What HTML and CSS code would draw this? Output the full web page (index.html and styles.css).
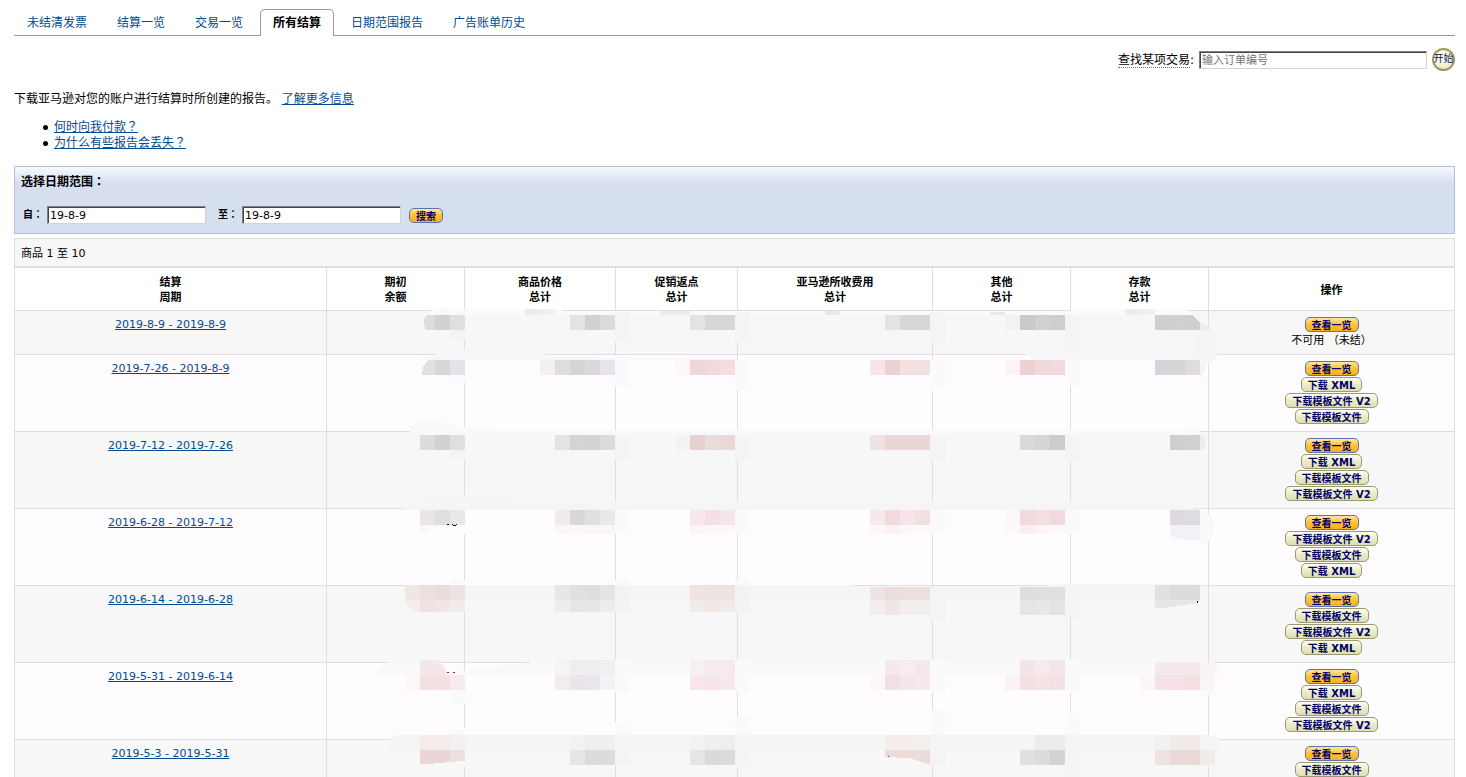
FILE: index.html
```html
<!DOCTYPE html>
<html lang="zh-CN">
<head>
<meta charset="utf-8">
<title>所有结算</title>
<link rel="stylesheet" href="styles.css">
</head>
<body>
<nav class="tabs">
  <a class="tab" href="#">未结清发票</a>
  <a class="tab" href="#">结算一览</a>
  <a class="tab" href="#">交易一览</a>
  <a class="tab tab-active" href="#" aria-current="page">所有结算</a>
  <a class="tab" href="#">日期范围报告</a>
  <a class="tab" href="#">广告账单历史</a>
</nav>

<form class="lookup">
  <label for="order"><span class="hint">查找某项交易</span>:</label>
  <input class="field lookup-field" id="order" type="text" placeholder="输入订单编号">
  <button class="go" type="button">开始</button>
</form>

<p class="intro">下载亚马逊对您的账户进行结算时所创建的报告。 <a href="#">了解更多信息</a></p>
<ul class="faq">
  <li><a href="#">何时向我付款<span class="punct" lang="zh-TW">？</span></a></li>
  <li><a href="#">为什么有些报告会丢失<span class="punct" lang="zh-TW">？</span></a></li>
</ul>

<form class="range">
  <h2 class="range-title">选择日期范围<span class="punct" lang="zh-TW">：</span></h2>
  <div class="range-row">
    <label for="from">自<span class="punct" lang="zh-TW">：</span></label>
    <input class="field date" id="from" type="text" value="19-8-9">
    <label class="label-to" for="to">至<span class="punct" lang="zh-TW">：</span></label>
    <input class="field date" id="to" type="text" value="19-8-9">
    <button class="btn btn-gold search" type="button">搜索</button>
  </div>
</form>

<section class="results">
  <div class="count">商品 1 至 10</div>
  <table class="grid">
    <colgroup>
      <col class="c-period"><col class="c-mid"><col class="c-price"><col class="c-promo"><col class="c-fee"><col class="c-mid"><col class="c-mid"><col class="c-action">
    </colgroup>
    <thead>
      <tr><th>结算<br>周期</th><th>期初<br>余额</th><th>商品价格<br>总计</th><th>促销返点<br>总计</th><th>亚马逊所收费用<br>总计</th><th>其他<br>总计</th><th>存款<br>总计</th><th>操作</th></tr>
    </thead>
    <tbody>
      <tr class="short"><td><a href="#">2019-8-9 - 2019-8-9</a></td><td></td><td></td><td></td><td></td><td></td><td></td>
        <td><div class="actions"><button class="btn btn-gold">查看一览</button><span>不可用 <span class="punct" lang="zh-TW">（</span>未结<span class="punct" lang="zh-TW">）</span></span></div></td></tr>
      <tr><td><a href="#">2019-7-26 - 2019-8-9</a></td><td></td><td></td><td></td><td></td><td></td><td></td>
        <td><div class="actions"><button class="btn btn-gold">查看一览</button><button class="btn">下载 XML</button><button class="btn">下载模板文件 V2</button><button class="btn">下载模板文件</button></div></td></tr>
      <tr><td><a href="#">2019-7-12 - 2019-7-26</a></td><td></td><td></td><td></td><td></td><td></td><td></td>
        <td><div class="actions"><button class="btn btn-gold">查看一览</button><button class="btn">下载 XML</button><button class="btn">下载模板文件</button><button class="btn">下载模板文件 V2</button></div></td></tr>
      <tr><td><a href="#">2019-6-28 - 2019-7-12</a></td><td></td><td></td><td></td><td></td><td></td><td></td>
        <td><div class="actions"><button class="btn btn-gold">查看一览</button><button class="btn">下载模板文件 V2</button><button class="btn">下载模板文件</button><button class="btn">下载 XML</button></div></td></tr>
      <tr><td><a href="#">2019-6-14 - 2019-6-28</a></td><td></td><td></td><td></td><td></td><td></td><td></td>
        <td><div class="actions"><button class="btn btn-gold">查看一览</button><button class="btn">下载模板文件</button><button class="btn">下载模板文件 V2</button><button class="btn">下载 XML</button></div></td></tr>
      <tr><td><a href="#">2019-5-31 - 2019-6-14</a></td><td></td><td></td><td></td><td></td><td></td><td></td>
        <td><div class="actions"><button class="btn btn-gold">查看一览</button><button class="btn">下载 XML</button><button class="btn">下载模板文件</button><button class="btn">下载模板文件 V2</button></div></td></tr>
      <tr><td><a href="#">2019-5-3 - 2019-5-31</a></td><td></td><td></td><td></td><td></td><td></td><td></td>
        <td><div class="actions"><button class="btn btn-gold">查看一览</button><button class="btn">下载模板文件</button></div></td></tr>
    </tbody>
  </table>
  <svg class="mask" viewBox="14 238 1441 539" preserveAspectRatio="none" shape-rendering="crispEdges" aria-hidden="true">
    <g fill="#fafafa">
      <path d="M427 315 432 309 440 308 464 309 555 309 564 311 1070 311 1072 309 1185 309 1196 315z"/>
    </g>
    <g fill="#f7f7f7">
      <path d="M464 315h2v25h-2zM737 315h2v27h-2zM932 315h2v28h-2zM1070 315h2v40h-2z"/>
      <path d="M409 435h791v25H409zM406 585h448v25H406zM920 588h160v26H920zM1053 584h145v22h-145zM390 738h825v28H390z"/>
    </g>
    <g fill="#fffcff">
      <path d="M464 360h2v22h-2zM615 357h2v30h-2zM737 360h2v30h-2zM932 360h2v31h-2zM1070 358h2v28h-2z"/>
      <path d="M403 510h790v24H403zM464 671h2v32h-2zM602 670h580v22H602z"/>
      <path d="M464 728h2v8h-2zM615 722h2v14h-2zM737 717h2v19h-2zM932 710h2v26h-2zM1070 713h2v23h-2z"/>
    </g>
    <g fill="#f6f5f8">
      <path d="M420 360 431 356 440 353 450 350H530L543 354 552 357 737 359V360z"/>
      <path d="M1023 353H1218L1215 360 1210 363H1200V360H1035z"/>
    </g>
    <path fill="#f4f4f4" d="M1198 322 1209 326 1214 332 1215 354 1211 362 1200 363V380L1205 370V360H1198z"/>
    <g fill="#f9f9fb">
      <path d="M409 435 412 426 418 421 431 420 460 427 498 430H1180L1190 428 1200 430V435z"/>
      <path d="M374 675 381 667 390 661 420 660 438 660 447 672 464 671 495 666 535 662 570 660H1155L1170 663 1216 664 1221 675z"/>
      <path d="M1200 510 1208 513 1214 520 1214 533 1209 542 1200 545z"/>
    </g>
    <g fill="#f4f5f4">
      <path d="M401 509 418 501 440 496 450 495 510 495 512 502 1130 502 1160 504 1192 508 1200 510H401z"/>
      <path d="M406 585H854V588H1020L1053 585H1200L1204 588 1201 600H406z"/>
      <path d="M387 750 391 738 398 735H1215L1220 739 1219 750z"/>
    </g>
    <g id="mosaic"></g>
    <g>
      <path fill="#dcdcdc" d="M427 315h8v15h-9l-2-5v-5z"/>
      <path fill="#e1e0e3" d="M428 360h7v15h-13l1-8z"/>
      <path fill="#cfcfcf" d="M1185 315h7l8 7v8h-15z"/>
      <path fill="#ededed" d="M1200 323l9 4 3 3h-12z"/>
      <path fill="#ededed" d="M1200 435h4l2 7-2 8h-4z"/>
      <path fill="#f0e7e5" d="M406 585h14v15h-15v-12z"/>
      <path fill="#f3eeec" d="M405 600h15v12l-9-2-5-5z"/>
      <path fill="#e7e7e7" d="M1155 600h45l-2 3-20 3-13 2h-10z"/>
      <path fill="#f9f7fa" d="M420 525h24l-14 4-10 4z"/>
      <path fill="#f3f1f5" d="M1170 525h30v15h-15l-15-4z"/>
      <path fill="#f4e7e9" d="M420 660h17l7 7 4 8h-28z"/>
      <path fill="#ead6d6" d="M420 750h30v12l-22 2h-8z"/>
      <path fill="#ede0df" d="M450 750h15v11l-15 1z"/>
      <path fill="#ecdbdb" d="M885 750h45v15l-12-4-8-3-25-1z"/>
    </g>
    <path fill="#111" d="M447 524h2v1h-2zM452 524h1v1h3v-1h1v1h-1v1h-3v-1h-1zM1197 601h1v2h-1z"/>
    <path fill="#b01018" d="M447 672h2v1h-2zM453 672h2v1h-2zM888 756h1v1h-1z"/>
  </svg>
</section>
<script src="mosaic.js"></script>
</body>
</html>
```

FILE: styles.css
```css
* { box-sizing: border-box; }

body {
  margin: 0;
  padding: 9px 11px 0 14px;
  height: 100vh;
  overflow: hidden;
  background: #fff;
  color: #000;
  font: 12px/16px "DejaVu Sans", "Noto Sans CJK SC", sans-serif;
}

a { color: #004b91; }

input, button { font-family: inherit; }

.punct {
  font-family: "Noto Sans CJK TC", sans-serif;
  line-height: 10px;
}

.tabs {
  display: flex;
  gap: 4px;
  height: 27px;
  border-bottom: 1px solid #999;
}

.tab {
  height: 27px;
  padding: 5px 12px 0;
  border: 1px solid transparent;
  border-bottom: 0;
  text-decoration: none;
}

.tab-active {
  border-color: #999;
  border-radius: 5px 5px 0 0;
  background: #fff;
  color: #000;
  font-weight: bold;
}

.lookup {
  display: flex;
  justify-content: flex-end;
  align-items: center;
  gap: 5px;
  margin-top: 12px;
  height: 23px;
}

.hint { border-bottom: 1px dotted #777; }

.field {
  height: 18px;
  margin: 0;
  padding: 1px 2px 0;
  border: 1px solid;
  border-color: #808080 #d6d3ce #d6d3ce #808080;
  box-shadow: inset 1px 1px #484448;
  background: #fff;
  color: #000;
  font-size: 11px;
  line-height: 15px;
}

.lookup-field { width: 228px; }

.field::placeholder { color: #757575; opacity: 1; }

.go {
  width: 23px;
  height: 23px;
  padding: 0;
  border: 2px solid #9c9b60;
  border-radius: 50%;
  background: radial-gradient(circle at 40% 35%, #fffff0, #e6e5b8);
  color: #11116b;
  font-size: 10px;
  line-height: 18px;
  white-space: nowrap;
  display: flex;
  justify-content: center;
}

.intro { margin: 20px 0 0; }

.faq {
  margin: 12px 0 0;
  padding-left: 29px;
  list-style: none;
}

.faq li {
  display: flex;
  align-items: center;
  gap: 6px;
}

.faq li::before {
  content: "";
  width: 5px;
  height: 5px;
  border-radius: 50%;
  background: #000;
}

.range {
  margin-top: 15px;
  height: 68px;
  padding: 7px 6px 0;
  border: 1px solid #b4c1de;
  background: linear-gradient(#f7f9fd, #d6dff0 16px);
}

.range-title {
  margin: 0;
  font-size: 12px;
  line-height: 16px;
}

.range-row {
  display: flex;
  align-items: center;
  margin-top: 16px;
  padding-left: 2px;
  font-size: 10px;
  font-weight: bold;
}

.date { width: 159px; margin-left: 4px; }
.label-to { margin-left: 12px; }
.search { margin-left: 8px; }

.results {
  position: relative;
  margin-top: 4px;
}

.count {
  height: 29px;
  padding: 7px 6px 0;
  border: 1px solid #dedee0;
  background: #f7f7f7;
  font-size: 11px;
}

.grid {
  width: 100%;
  table-layout: fixed;
  border-collapse: collapse;
  font-size: 11px;
  line-height: 15px;
}

.c-period { width: 312px; }
.c-mid { width: 138px; }
.c-price { width: 151px; }
.c-promo { width: 122px; }
.c-fee { width: 195px; }
.c-action { width: 246px; }

.grid th, .grid td {
  padding: 0;
  border: 1px solid #dedee0;
  text-align: center;
}

.grid th {
  height: 43px;
  padding-top: 2px;
}

.grid td {
  height: 77px;
  padding-top: 6px;
  vertical-align: top;
}

.grid .short td { height: 44px; }

.grid tbody tr { background: #fffcff; }
.grid tbody tr:nth-child(odd) { background: #f7f7f7; }

.actions {
  display: flex;
  flex-direction: column;
  align-items: center;
  gap: 1px;
}

.btn {
  height: 15px;
  padding: 1px 6px 0;
  border: 1px solid #9a9a6e;
  border-radius: 5px;
  background: linear-gradient(#fffff4, #ebebcb 50%, #dedeb4);
  color: #000066;
  font-size: 10px;
  font-weight: bold;
  line-height: 13px;
  white-space: nowrap;
}

.btn-gold {
  border-color: #5d74a8;
  background: linear-gradient(#ffe7a4, #ffc43c 45%, #f9b021);
}

.mask {
  position: absolute;
  left: 0;
  top: 0;
  width: 100%;
  height: 539px;
  pointer-events: none;
}
```

FILE: mosaic.js
```javascript
// Each entry: left, top, height, then one colour for every 15-unit tile.
const tiles = [
  [525, 309, 6, "ececec f0f0f0"], [660, 311, 4, "ededed ededed"],
  [825, 311, 4, "e8e8e8"], [990, 312, 3, "e9e9e9"], [1125, 309, 6, "ededed f0f0f0"],
  [435, 315, 15, "d1d1d1 dfdfdf"], [570, 315, 15, "e3e3e3 d1d1d1 dbdbdb"],
  [690, 315, 15, "e2e3e2 d6d7d6 d6d7d6"], [885, 315, 15, "e3e3e3 d7d7d7 d7d7d7"],
  [1005, 315, 15, "f2f2f2 cacaca d1d1d1 cecece"], [1155, 315, 15, "cfcfcf d0d0d0"],
  [450, 330, 10, "f4f4f4"], [615, 312, 30, "f4f4f4"], [735, 312, 30, "f4f4f4"],
  [930, 312, 31, "f4f4f4"], [1065, 315, 38, "f4f4f4"],
  [435, 360, 15, "d7d6d9 e5e3e7"], [540, 360, 15, "f3eff2 dfdce0 d5d4d7 ddd8dc e8e4e9"],
  [675, 360, 15, "fdf7fb efd6d8 f1dadd f3dde0"], [870, 360, 15, "f6e6e9 eed1d4 f3e0e2 f3e0e2"],
  [1005, 360, 15, "fcf2f7 efd1d4 f0d9dd f1d9dd"], [1155, 360, 15, "d6d5d9 d6d5d8 dfdbdf"],
  [450, 375, 8, "faf9fc"], [615, 355, 32, "faf9fc"], [735, 360, 30, "faf9fc"],
  [930, 360, 30, "faf9fc"], [1065, 360, 26, "faf9fc"],
  [420, 435, 15, "dcdcdc d1d1d1 dfdfdf"], [555, 435, 15, "e3e3e3 d4d4d4 d2d3d2 dadbda"],
  [675, 435, 15, "f4f3f3 e6d1d0 ebdcdc e9d8d8"], [870, 435, 15, "eee2e2 e9d6d6 e8d7d6 e8d7d6"],
  [1020, 435, 15, "dadada d5d5d5 cccccc"], [1170, 435, 15, "cfcfcf d0d0d0"],
  [450, 450, 9, "f4f4f4"], [615, 435, 25, "f4f4f4"], [735, 435, 25, "f4f4f4"],
  [930, 435, 25, "f4f4f4"], [1065, 435, 25, "f4f4f4"],
  [420, 510, 15, "e9e5e9 dfdee0 e8e7ea"], [555, 510, 15, "f0ebef d8d8da e0dfe2 e9e8eb"],
  [555, 525, 9, "f9f5f9 fcf7fb f9f5f9 f9f5f9"], [690, 510, 15, "f7e8ed f4e0e4 f6e6e9"],
  [690, 525, 9, "fbf5fa fdf6fa fdf6fa"], [870, 510, 15, "f6e9ee f1dade f5e4e8 f2dfe1"],
  [870, 525, 9, "fcf7fb fbf0f5 fcf7fb fdf8fc"], [1005, 510, 15, "fbf7fb f2dade f3dee1 f1d9dd"],
  [1005, 525, 9, "fdf8fc faeef2 fdf3f8 fdf8fc"], [1170, 510, 15, "dedadd dddcdf"],
  [615, 510, 24, "faf9fc"], [735, 510, 24, "faf9fc"], [930, 510, 24, "faf9fc"], [1065, 510, 24, "faf9fc"],
  [420, 585, 15, "ebdfdf eadbdc eee3e4"], [420, 600, 12, "eee3e1 f0e7e4 f1ecea"],
  [555, 585, 15, "e6e7e6 dfe0df dedfdd e3e4e3"], [555, 600, 12, "eceded e5e6e5 e6e7e6 ebecec"],
  [690, 585, 15, "efe4e1 ede3e0 eee3e1"], [690, 600, 12, "f1ece9 f1e8e4 f1ece9"],
  [870, 587, 13, "eee4e4 ebdddd ece0df ece0df"], [870, 600, 15, "f3eeed f0e6e3 f3eeed f1eeec"],
  [1020, 587, 13, "dddedd dedfde dedfde"], [1020, 600, 15, "e5e5e5 e7e7e7 e3e3e3"],
  [1155, 585, 15, "e0e0e0 dbdcdb dbdcdb"],
  [615, 585, 27, "f3f3f3"], [735, 585, 27, "f3f3f3"], [930, 588, 32, "f4f4f4"], [1065, 585, 32, "f3f4f3"],
  [615, 580, 5, "faf9fc"], [735, 580, 5, "faf9fc"], [450, 580, 5, "faf9fc"],
  [405, 675, 15, "fdf6fa f4dfe1 f5e0e3 f8eaee"], [450, 690, 14, "faf9fc"],
  [555, 660, 15, "f4f3f6 efedf0 eeedf0 f0eff2"], [555, 675, 15, "f0ecf0 eae5e9 e9e7eb f3f2f5"],
  [690, 660, 15, "f6f0f4 f6ebef f6eaee"], [690, 675, 15, "f7e7ec f6e4e8 f6e8eb"],
  [885, 660, 15, "f6e8ec f7ecef f5e8eb"], [870, 675, 15, "fdf6fa f3dee1 f6e6e9 f7e8eb"],
  [1020, 660, 15, "f5e4e7 f6eaee f3e6e7"], [1005, 675, 15, "fcf1f7 f4dfe2 f5e4e7 f5e0e4"],
  [1155, 662, 13, "f5e9ec f5e9ec f5e9ec f8f3f6"], [1140, 675, 15, "fcf6fa f6e2e6 f6e2e6 f5e0e4 faf3f8"],
  [615, 660, 32, "faf9fc"], [735, 660, 32, "faf9fc"], [930, 660, 32, "faf9fc"], [1065, 660, 32, "faf9fc"],
  [1200, 690, 5, "faf9fc"], [450, 730, 5, "faf9fc"],
  [615, 722, 13, "faf9fc"], [735, 717, 18, "faf9fc"], [930, 710, 25, "faf9fc"], [1065, 713, 22, "faf9fc"],
  [420, 735, 15, "f3eceb f3eceb f2f1f1"],
  [570, 735, 15, "f1f2f1 eeefee eeefee"], [570, 750, 15, "e5e6e5 dadbda dbdcdb"],
  [690, 735, 15, "f1f2f1 eeefee edeeed"], [690, 750, 15, "e4e5e4 d9dad9 dbdbdb"],
  [885, 735, 15, "f3edec f3edec f3efef"], [1035, 735, 15, "ebecec ebecec"],
  [1020, 750, 15, "e0e0e0 dcdcdc d3d3d3"], [1155, 735, 15, "f2f1f1 f1ebea f1ecea"],
  [1155, 750, 15, "eee3e2 ebd9d8 ead8d7 f0ecea"],
  [615, 735, 30, "f3f4f3"], [735, 735, 32, "f3f4f3"], [930, 735, 31, "f3f4f3"], [1065, 735, 42, "f3f4f3"]
];

const layer = document.getElementById("mosaic");
for (const [left, top, height, colours] of tiles) {
  colours.split(" ").forEach((colour, i) => {
    const tile = document.createElementNS("http://www.w3.org/2000/svg", "rect");
    tile.setAttribute("x", left + i * 15);
    tile.setAttribute("y", top);
    tile.setAttribute("width", 15);
    tile.setAttribute("height", height);
    tile.setAttribute("fill", "#" + colour);
    layer.append(tile);
  });
}
```
